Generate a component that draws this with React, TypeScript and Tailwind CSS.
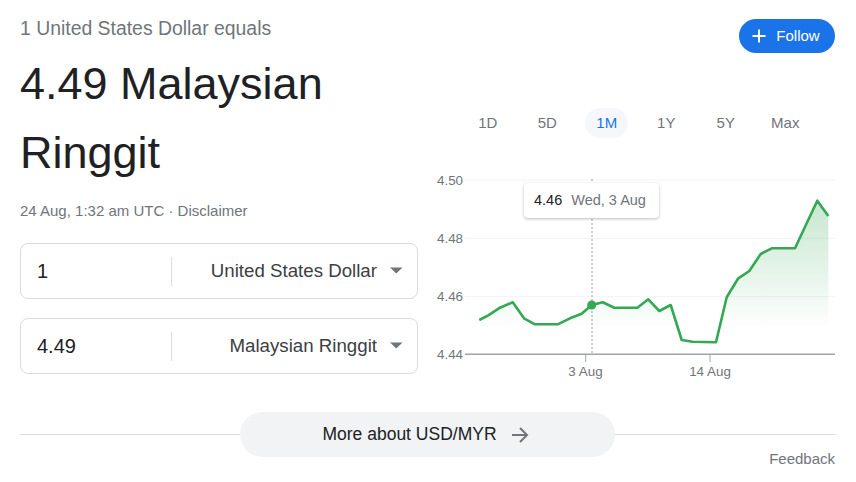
import React from 'react';

const points: [number, number][] = [
  [479.3, 320], [488.3, 315.3], [500, 307.7], [512.7, 302.3], [524, 318.3], [535, 324.3],
  [557.7, 324.3], [570, 318.3], [581.7, 313.7], [591.7, 305], [602.7, 302.3], [614.3, 307.7],
  [637.3, 307.7], [648.3, 299.3], [659.3, 311], [670.7, 305], [681.7, 340], [692.7, 341.7],
  [716, 342.3], [726.7, 297.3], [738.3, 278.3], [749.3, 271], [760.7, 254], [771.7, 248.3],
  [795, 248.3], [806.7, 223.3], [817.3, 200.7], [828.3, 216],
];

const ranges = ['1D', '5D', '1M', '1Y', '5Y', 'Max'];

const yLabels = [
  { label: '4.50', y: 180 },
  { label: '4.48', y: 238.3 },
  { label: '4.46', y: 296.7 },
];

const CurrencyBox: React.FC<{ amount: string; currency: string }> = ({ amount, currency }) => (
  <div className="flex items-center h-[56px] rounded-lg border border-[#dadce0]">
    <div className="w-[150px] pl-4 text-[20px] text-[#202124]">{amount}</div>
    <div className="w-px h-[29px] bg-[#dadce0]" />
    <div className="flex-1 flex items-center justify-end pr-[14px]">
      <span className="text-[18.7px] text-[#3c4043]">{currency}</span>
      <svg width="13" height="7" viewBox="0 0 13 7" className="ml-[13px]">
        <path d="M0 0.5 L12.5 0.5 L6.25 6.5 Z" fill="#70757a" />
      </svg>
    </div>
  </div>
);

const Chart: React.FC = () => {
  const line = points.map(p => p.join(',')).join(' ');
  const first = points[0];
  const last = points[points.length - 1];
  const area = `M${first[0]},354 L${line.split(' ').join(' L')} L${last[0]},354 Z`;

  return (
    <div className="relative mt-8 w-[405px] h-[215px]">
      <svg width="405" height="215" viewBox="430 170 405 215">
        <defs>
          <linearGradient id="fill" x1="0" y1="200" x2="0" y2="330" gradientUnits="userSpaceOnUse">
            <stop offset="0" stopColor="#34a853" stopOpacity="0.28" />
            <stop offset="1" stopColor="#34a853" stopOpacity="0" />
          </linearGradient>
        </defs>
        {yLabels.map(l => (
          <g key={l.label}>
            <line x1="465" x2="835" y1={l.y} y2={l.y} stroke="#f1f3f4" strokeWidth="1" />
            <text x="437" y={l.y + 4.5} fontSize="13.4" fill="#70757a" fontFamily="Liberation Sans, Arial, sans-serif">{l.label}</text>
          </g>
        ))}
        <text x="437" y="358.8" fontSize="13.4" fill="#70757a" fontFamily="Liberation Sans, Arial, sans-serif">4.44</text>
        <path d={area} fill="url(#fill)" />
        <line x1="592" x2="592" y1="179" y2="354" stroke="#9aa0a6" strokeWidth="1" strokeDasharray="2 2" />
        <polyline points={line} fill="none" stroke="#34a853" strokeWidth="2.6" strokeLinejoin="round" />
        <circle cx="591.7" cy="305" r="4.5" fill="#34a853" />
        <line x1="465" x2="835" y1="354.3" y2="354.3" stroke="#a0a4a8" strokeWidth="1.5" />
        <line x1="585.7" x2="585.7" y1="354" y2="362" stroke="#a0a4a8" strokeWidth="1" />
        <line x1="710" x2="710" y1="354" y2="362" stroke="#a0a4a8" strokeWidth="1" />
        <text x="585.5" y="375.5" fontSize="13.4" fill="#70757a" textAnchor="middle" fontFamily="Liberation Sans, Arial, sans-serif">3 Aug</text>
        <text x="710" y="375.5" fontSize="13.4" fill="#70757a" textAnchor="middle" fontFamily="Liberation Sans, Arial, sans-serif">14 Aug</text>
      </svg>
      <div className="absolute left-[94px] top-[13px] w-[135px] h-[35px] flex items-center pl-[10px] gap-[9px] bg-white rounded-[4px] shadow-[0_1px_3px_rgba(60,64,67,0.35)] text-[14.5px]">
        <span className="text-[#202124]">4.46</span>
        <span className="text-[#70757a]">Wed, 3 Aug</span>
      </div>
    </div>
  );
};

export default function App() {
  return (
    <div className="w-[856px] h-[482px] bg-white pl-5 pr-[21px] font-['Liberation_Sans',Arial,sans-serif] overflow-hidden">
      <div className="flex">
        <div className="w-[398px] flex flex-col">
          <div className="pt-4 text-[19.4px] leading-[24px] text-[#70757a]">1 United States Dollar equals</div>
          <div className="mt-[9px] text-[45px] leading-[69px] text-[#202124]">4.49 Malaysian Ringgit</div>
          <div className="mt-[14px] text-[15px] leading-[20px] text-[#70757a]">24 Aug, 1:32 am UTC · Disclaimer</div>
          <div className="mt-[22px] flex flex-col gap-[19px]">
            <CurrencyBox amount="1" currency="United States Dollar" />
            <CurrencyBox amount="4.49" currency="Malaysian Ringgit" />
          </div>
        </div>
        <div className="ml-3 flex-1 flex flex-col">
          <button className="self-end mt-[19px] h-[34px] w-[96px] rounded-full bg-[#1a73e8] text-white text-[15px] flex items-center justify-center gap-[10px] pr-[2px]">
            <svg width="14" height="14" viewBox="0 0 14 14">
              <path d="M7 0.5 V13.5 M0.5 7 H13.5" stroke="white" strokeWidth="2" />
            </svg>
            <span>Follow</span>
          </button>
          <div className="mt-[55px] ml-[28px] flex">
            {ranges.map(r => (
              <div key={r} className="w-[59.5px] h-[30px] flex items-center justify-center">
                {r === '1M' ? (
                  <span className="w-[43px] h-[30px] rounded-full bg-[#f5f7fa] flex items-center justify-center text-[15px] text-[#1a73e8]">{r}</span>
                ) : (
                  <span className="text-[15px] text-[#70757a]">{r}</span>
                )}
              </div>
            ))}
          </div>
          <Chart />
        </div>
      </div>
      <div className="mt-[27px] flex items-center h-[45px]">
        <div className="flex-1 h-px bg-[#dadce0]" />
        <div className="w-[375px] h-[45px] rounded-full bg-[#f1f3f4] flex items-center justify-center gap-[14px] pr-[4px]">
          <span className="text-[17.5px] text-[#202124]">More about USD/MYR</span>
          <svg width="18" height="16" viewBox="0 0 18 16">
            <path d="M1 8 H16 M9 1 L16 8 L9 15" stroke="#70757a" strokeWidth="2" fill="none" />
          </svg>
        </div>
        <div className="flex-1 h-px bg-[#dadce0]" />
      </div>
      <div className="-mt-[7px] text-right text-[15px] leading-[18px] text-[#70757a]">Feedback</div>
    </div>
  );
}
